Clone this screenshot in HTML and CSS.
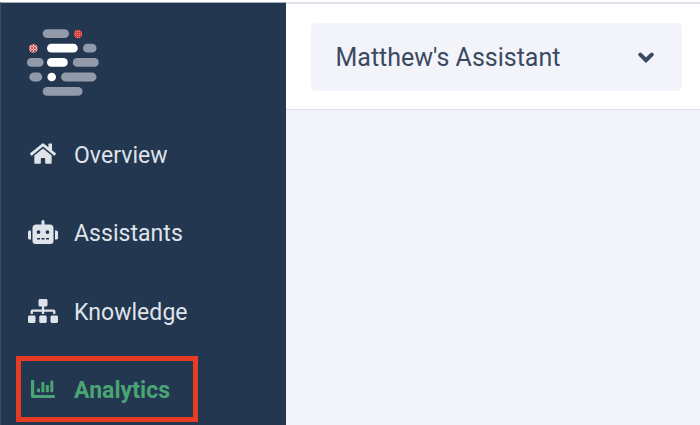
FILE: index.html
```html
<!DOCTYPE html>
<html lang="en">
<head>
    <meta charset="UTF-8">
    <meta name="viewport" content="width=device-width, initial-scale=1.0">
    <title>Analytics</title>
    <link rel="stylesheet" href="styles.css">
</head>
<body>
    <div class="layout">
        <aside class="sidebar">
            <svg class="logo" viewBox="0 0 72 68">
                <defs>
                    <pattern id="dots" width="2" height="2" patternUnits="userSpaceOnUse">
                        <rect width="2" height="2" fill="#dc4038"/>
                        <rect width="1" height="1" fill="#d98a88"/>
                    </pattern>
                    <pattern id="dots-light" width="3" height="3" patternUnits="userSpaceOnUse">
                        <rect width="3" height="3" fill="#dc4a40"/>
                        <rect width="1" height="2" fill="#ddd5da"/>
                        <rect x="1" y="2" width="2" height="1" fill="#ddd5da"/>
                    </pattern>
                </defs>
                <g fill="#929aaa">
                    <rect x="15.7" y="0.2" width="26.3" height="8.8" rx="4.4"/>
                    <rect x="56" y="14.8" width="13.5" height="8.8" rx="4.4"/>
                    <rect x="0" y="29" width="16.6" height="8.8" rx="4.4"/>
                    <rect x="45.8" y="29" width="26" height="8.8" rx="4.4"/>
                    <rect x="2.3" y="43.6" width="13" height="8.8" rx="4.4"/>
                    <rect x="34" y="43.6" width="35.5" height="8.8" rx="4.4"/>
                    <rect x="15.7" y="58" width="39.8" height="8.8" rx="4.4"/>
                </g>
                <g fill="#fff">
                    <rect x="20" y="14.8" width="30.8" height="8.8" rx="4.4"/>
                    <rect x="20" y="29" width="20.8" height="8.8" rx="4.4"/>
                    <circle cx="24.7" cy="48" r="4.3"/>
                </g>
                <circle cx="51" cy="5" r="4.2" fill="url(#dots)"/>
                <circle cx="6.3" cy="19.3" r="4.4" fill="url(#dots-light)"/>
            </svg>
            <nav>
                <ul class="nav-links">
                    <li>
                        <a href="#">
                            <span class="icon"><svg class="home" viewBox="0 0 576 512"><path d="M280.37 148.26L96 300.11V464a16 16 0 0 0 16 16l112.06-.29a16 16 0 0 0 15.92-16V368a16 16 0 0 1 16-16h64a16 16 0 0 1 16 16v95.64a16 16 0 0 0 16 16.05L464 480a16 16 0 0 0 16-16V300L295.67 148.26a12.19 12.19 0 0 0-15.3 0zM571.6 251.47L488 182.56V44.05a12 12 0 0 0-12-12h-56a12 12 0 0 0-12 12v72.61L318.47 43a48 48 0 0 0-61 0L4.34 251.47a12 12 0 0 0-1.6 16.9l25.5 31A12 12 0 0 0 45.15 301l235.22-193.74a12.19 12.19 0 0 1 15.3 0L530.9 301a12 12 0 0 0 16.9-1.6l25.5-31a12 12 0 0 0-1.7-16.93z"/></svg></span>
                            <span>Overview</span>
                        </a>
                    </li>
                    <li>
                        <a href="#">
                            <span class="icon"><svg class="robot" viewBox="0 0 640 512"><path d="M32 224H64V416H32A32 32 0 0 1 0 384V256A32 32 0 0 1 32 224Zm512-48V448a64 64 0 0 1-64 64H160a64 64 0 0 1-64-64V176a80 80 0 0 1 80-80H288V32a32 32 0 0 1 64 0V96H464A80 80 0 0 1 544 176ZM264 256a40 40 0 1 0-40 40A40 40 0 0 0 264 256Zm-8 128H192v32h64Zm96 0H288v32h64ZM456 256a40 40 0 1 0-40 40A40 40 0 0 0 456 256Zm-8 128H384v32h64ZM640 256V384a32 32 0 0 1-32 32H576V224h32A32 32 0 0 1 640 256Z"/></svg></span>
                            <span>Assistants</span>
                        </a>
                    </li>
                    <li>
                        <a href="#">
                            <span class="icon"><svg class="sitemap" viewBox="0 0 640 512"><path d="M128 352H32c-17.67 0-32 14.33-32 32v96c0 17.67 14.33 32 32 32h96c17.67 0 32-14.33 32-32v-96c0-17.67-14.33-32-32-32zm-24-80h192v48h48v-48h192v48h48v-57.59c0-21.17-17.23-38.41-38.41-38.41H344v-64h40c17.67 0 32-14.33 32-32V32c0-17.67-14.33-32-32-32H256c-17.67 0-32 14.33-32 32v96c0 17.67 14.33 32 32 32h40v64H94.41C73.23 224 56 241.23 56 262.41V320h48v-48zm264 80h-96c-17.67 0-32 14.33-32 32v96c0 17.67 14.33 32 32 32h96c17.67 0 32-14.33 32-32v-96c0-17.67-14.33-32-32-32zm240 0h-96c-17.67 0-32 14.33-32 32v96c0 17.67 14.33 32 32 32h96c17.67 0 32-14.33 32-32v-96c0-17.67-14.33-32-32-32z"/></svg></span>
                            <span>Knowledge</span>
                        </a>
                    </li>
                    <li class="active">
                        <a href="#">
                            <span class="icon"><svg class="chart" viewBox="0 0 24 18"><path d="M.8 0h1.6q.8 0 .8.8V15h20q.7 0 .7.7v1.6q0 .7-.7.7H1.3Q0 18 0 16.7V.8Q0 0 .8 0z"/><rect x="6" y="8.5" width="3" height="3.7" rx=".6"/><rect x="10.4" y="2" width="3" height="10.2" rx=".6"/><rect x="14.9" y="5" width="3" height="7.2" rx=".6"/><rect x="19.3" y=".4" width="3" height="11.8" rx=".6"/></svg></span>
                            <span>Analytics</span>
                        </a>
                    </li>
                </ul>
            </nav>
        </aside>
        <main>
            <header>
                <div class="select">
                    <span>Matthew's Assistant</span>
                    <svg class="chevron" viewBox="0 0 16 11"><path d="M2.3 2.6L8 8.2l5.7-5.6"/></svg>
                </div>
            </header>
        </main>
    </div>
</body>
</html>
```
FILE: styles.css
```css
* {
    margin: 0;
    padding: 0;
    box-sizing: border-box;
}

body {
    font-family: Roboto, sans-serif;
    background-color: #fff;
    overflow: hidden;
}

.layout {
    display: flex;
    height: 100vh;
    padding-top: 2px;
}

.sidebar {
    width: 286px;
    flex-shrink: 0;
    padding: 26px 0 0 26px;
    background-color: #243750;
    border-top: 1px solid #a3acb9;
    border-left: 1px solid #3b4c63;
}

.logo {
    display: block;
    width: 72px;
    height: 68px;
}

.nav-links {
    list-style: none;
    padding-top: 19px;
}

.nav-links li {
    position: relative;
    height: 78.5px;
}

.nav-links a {
    display: flex;
    align-items: center;
    height: 78px;
    color: #dfe3ea;
    font-size: 23px;
    letter-spacing: 0.05px;
    text-decoration: none;
}

.nav-links .active a {
    color: #4aa473;
    font-weight: bold;
}

/* Box around the current page */
.nav-links .active::before {
    content: "";
    position: absolute;
    left: -11.5px;
    top: 4px;
    width: 172px;
    height: 56px;
    border: 5px solid #e63c24;
}

.icon {
    display: flex;
    justify-content: center;
    width: 32px;
    margin: 0 15px 3px 0;
}

svg {
    fill: currentColor;
}

.home {
    width: 26px;
    margin-top: 1px;
}

.robot,
.sitemap {
    width: 30px;
}

.chart {
    width: 24px;
}

main {
    flex: 1;
    background-color: #f3f4f9;
    border-top: 2px solid #dfe3ea;
}

header {
    height: 106px;
    padding: 19px 18px 0 25px;
    background-color: #fff;
    border-bottom: 1px solid #dfe1e5;
}

.select {
    display: flex;
    justify-content: space-between;
    align-items: center;
    height: 68px;
    padding: 0 28px 0 24.5px;
    border-radius: 5px;
    background-color: #f3f4f9;
    color: #3a4961;
    font-size: 25px;
}

.chevron {
    width: 16px;
    fill: none;
    stroke: currentColor;
    stroke-width: 4;
    stroke-linecap: round;
}
```
